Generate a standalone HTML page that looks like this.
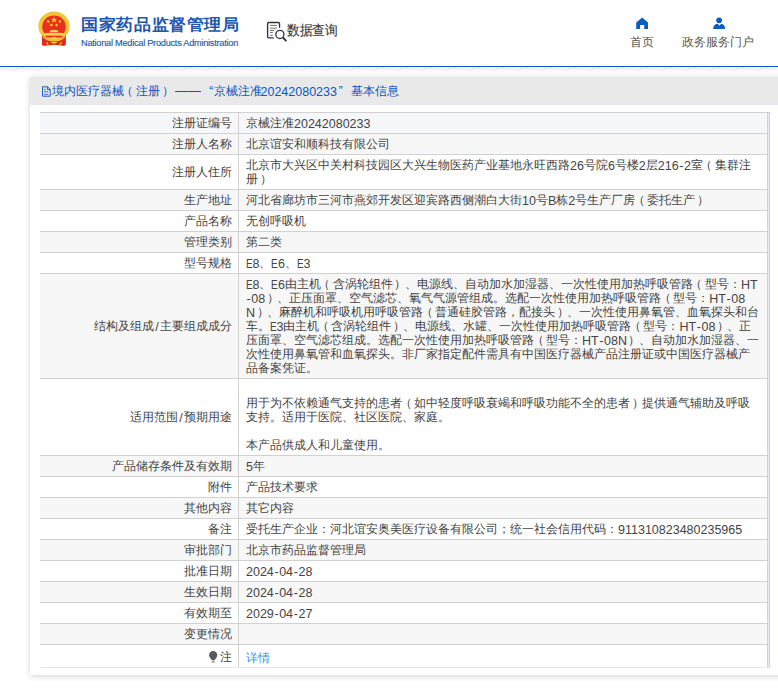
<!DOCTYPE html>
<html><head><meta charset="utf-8"><style>
*{box-sizing:border-box}
html,body{margin:0;padding:0;background:#fff;width:778px;height:688px;overflow:hidden}
body{font-family:"Liberation Sans",sans-serif;font-size:12px;color:#333;position:relative;text-spacing-trim:space-all}
.abs{position:absolute}
#cn{left:80.5px;top:13px;font-size:16px;font-weight:bold;color:#2256ae;white-space:nowrap;line-height:24px;letter-spacing:0.63px;transform:scaleX(1.06);transform-origin:0 0}
#en{left:81px;top:37px;font-size:9.2px;color:#2859b0;white-space:nowrap;line-height:12px;letter-spacing:-0.25px;-webkit-text-stroke:0.15px #2859b0}
#sqt{left:286.7px;top:20px;font-size:14.2px;letter-spacing:0px;color:#3a3a3a;line-height:20px;white-space:nowrap;transform:scaleX(0.91);transform-origin:0 0;-webkit-text-stroke:0.15px #3a3a3a}
.nav{text-align:center;font-size:12px;color:#555;line-height:16px;white-space:nowrap}
#topline{left:0;top:66px;width:778px;height:1px;background:#0b5ebf}
#hatch{left:0;top:67px;width:778px;height:3px;background:linear-gradient(135deg,transparent 35%,#e0e0e0 35%,#e0e0e0 65%,transparent 65%) 0 0/3px 3px}
#panel{left:30px;top:77px;width:760px;height:598px;background:#fff;box-shadow:0 1px 6px rgba(0,0,0,.18)}
#ph{left:0;top:0;width:100%;height:28px;background:#e9e9e9;border-bottom:1px solid #e6eaf4}
.tt{position:absolute;top:6px;font-size:12px;color:#0d55c2;line-height:16px;white-space:nowrap}
table{position:absolute;left:10px;top:35px;border-collapse:collapse;width:729.5px}
td{border-top:1px solid #d1d1d1;font-size:12px;line-height:14px;padding:3px 6px 3px 7px;color:#444;vertical-align:middle;white-space:nowrap}
td.l{width:198.5px;text-align:right;border-right:1px solid #d1d1d1;padding-right:6px}
td.e{width:2px;padding:0;border-left:1px solid #d1d1d1;border-right:1px solid #d1d1d1;background:#e8ebf3 !important;border-top:none}
tr.first td.e{border-top:1px solid #d1d1d1}
tr.last td.e{border-bottom:none}
tr:nth-child(even) td{background:#f7f7f7}
tr.first td{background:#f5f7fb}
.pl{position:relative;left:-2.5px}
.pr{position:relative;left:1.5px}
.lt{font-size:12.5px;position:relative;top:1px}
.E{display:inline-block;width:6.5px;transform:scaleX(0.8);transform-origin:0 0}
.hy{margin:0 0.6px}
.sl{margin:0 1.3px}

tr.last td{border-bottom:1px solid #e4e9f2;padding-top:5px;padding-bottom:3px}
.bulb{vertical-align:-2px;margin-right:1.7px}
.link{color:#3d8de6;font-size:12px;position:relative;top:1px;letter-spacing:0.3px}
</style></head><body>
<svg class="abs" style="left:36px;top:9px" width="36" height="40" viewBox="36 9 36 40">
 <path d="M41.8 34 L66 34 L65.8 45.2 Q63 46 60.5 45.6 L54 44.8 L47.5 45.6 Q45 46 42 45.2Z" fill="#e0281c"/>
 <ellipse cx="54" cy="26.1" rx="15.7" ry="14.5" fill="#f3c636"/>
 <ellipse cx="54" cy="26.8" rx="11.8" ry="11.3" fill="#e8301f"/>
 <polygon points="54,16.6 54.8,18.9 57.2,18.9 55.3,20.3 56,22.6 54,21.2 52,22.6 52.7,20.3 50.8,18.9 53.2,18.9" fill="#f7d43c"/>
 <circle cx="48.2" cy="21.5" r="1.2" fill="#f7d43c"/>
 <circle cx="59.9" cy="21.5" r="1.2" fill="#f7d43c"/>
 <circle cx="51.4" cy="25" r="1.2" fill="#f7d43c"/>
 <circle cx="56.5" cy="25" r="1.2" fill="#f7d43c"/>
 <path d="M49.3 32.2 L50.3 30.6 L52 30 H56 L57.7 30.6 L58.7 32.2Z" fill="#f8d75a"/>
 <rect x="44.8" y="32.9" width="18.4" height="2.9" fill="#f6d24a"/><rect x="45.5" y="35.8" width="17" height="1.6" fill="#e8301f"/>
 <path d="M42.5 35.5 Q46 40 54 40.2 Q62 40 65.5 35.5 L65 37.5 Q61 41.6 54 41.6 Q47 41.6 43 37.5Z" fill="#f3c636"/>
 <path d="M51.3 37.2 Q54 36.5 56.7 37.2 L56.4 39.8 Q54 39.3 51.6 39.8Z" fill="#f3c636"/>
 <path d="M50.5 42.6 Q54 41 57.5 42.6 Q54 44.6 50.5 42.6Z" fill="#f2ca3a"/>
 <path d="M45.8 42 L47.5 42.3 L48.8 45.5 L47.8 45.6Z" fill="#f2ca3a"/>
 <path d="M62.2 42 L60.5 42.3 L59.2 45.5 L60.2 45.6Z" fill="#f2ca3a"/>
</svg>
<div id="cn" class="abs">国家药品监督管理局</div>
<div id="en" class="abs">National Medical Products Administration</div>
<svg class="abs" style="left:260px;top:12px" width="36" height="36" viewBox="260 12 36 36">
 <path d="M273.8 37.8H268.6Q267.6 37.8 267.6 36.8V23.5Q267.6 22.5 268.6 22.5H278.5Q279.5 22.5 279.5 23.5V27.7" fill="none" stroke="#33333f" stroke-width="1.35"/>
 <path d="M270.1 25.4h6.9M270.1 28.2h6.9M270.1 30.5h4.3M270.1 32.5h2.7M270.1 35.3h2.7" stroke="#6f6f78" stroke-width="1"/>
 <circle cx="279.9" cy="34.4" r="4.05" fill="none" stroke="#33333f" stroke-width="1.35"/>
 <path d="M282.9 37.5l3.5 3.6" stroke="#33333f" stroke-width="1.8"/>
</svg>
<div id="sqt" class="abs">数据查询</div>
<svg class="abs" style="left:630px;top:14px" width="24" height="18" viewBox="630 14 24 18"><path d="M642.2 17.6L636.2 22.4V29H640.1V25H644.2V29H648V22.4Z" fill="#0a5cc5"/></svg>
<div class="abs nav" style="left:622px;width:40px;top:34px">首页</div>
<svg class="abs" style="left:708px;top:14px" width="24" height="18" viewBox="708 14 24 18"><circle cx="719.1" cy="20.3" r="2.9" fill="#0a5cc5"/><path d="M713.1 29.1Q713.3 25 716.3 23.9H718L719.5 25.8L721 23.9H722.2Q725 25 725.1 29.1Z" fill="#0a5cc5"/></svg>
<div class="abs nav" style="left:678px;width:80px;top:34px">政务服务门户</div>
<div id="topline" class="abs"></div>
<div id="hatch" class="abs"></div>
<div id="panel" class="abs">
 <div id="ph" class="abs"></div>
 <svg class="abs" style="left:10px;top:8px" width="12" height="12" viewBox="40 85 12 12">
  <path d="M42.5 86.8H47.6L50.2 89.4V96.2H42.5Z" fill="none" stroke="#1b5ccc" stroke-width="1"/>
  <path d="M47.5 86.8V89.5H50.2" fill="none" stroke="#1b5ccc" stroke-width="1"/>
  <path d="M44 89.5h1.8M44 91.7h4.3M44 94.3h4.3" stroke="#2a5fc8" stroke-width="0.9"/>
 </svg>
 <div class="tt" style="left:21.5px;">境内医疗器械</div><div class="tt" style="left:91.3px;">（</div><div class="tt" style="left:106px;">注册</div><div class="tt" style="left:131.6px;">）</div><div class="tt" style="left:145px;transform:scaleX(1.08);transform-origin:0 0;display:inline-block">——</div><div class="tt" style="left:179.3px;">“</div><div class="tt" style="left:183.5px;">京械注准</div><div class="tt" style="left:230.5px;font-size:12.5px;margin-top:1px">20242080233</div><div class="tt" style="left:308.8px;">”</div><div class="tt" style="left:320.5px;">基本信息</div>
 <table>
<tr class="first"><td class="l">注册证编号</td><td>京械注准<span class="lt">20242080233</span></td><td class="e"></td></tr>
<tr><td class="l">注册人名称</td><td>北京谊安和顺科技有限公司</td><td class="e"></td></tr>
<tr><td class="l">注册人住所</td><td>北京市大兴区中关村科技园区大兴生物医药产业基地永旺西路<span class="lt">26</span>号院<span class="lt">6</span>号楼<span class="lt">2</span>层<span class="lt">216<span class="hy">-</span>2</span>室<span class="pl">（</span>集群注<br>册<span class="pr">）</span></td><td class="e"></td></tr>
<tr><td class="l">生产地址</td><td>河北省廊坊市三河市燕郊开发区迎宾路西侧潮白大街<span class="lt">10</span>号<span class="lt">B</span>栋<span class="lt">2</span>号生产厂房<span class="pl">（</span>委托生产<span class="pr">）</span></td><td class="e"></td></tr>
<tr><td class="l">产品名称</td><td>无创呼吸机</td><td class="e"></td></tr>
<tr><td class="l">管理类别</td><td>第二类</td><td class="e"></td></tr>
<tr><td class="l">型号规格</td><td><span class="lt"><span class="E">E</span>8</span>、<span class="lt"><span class="E">E</span>6</span>、<span class="lt"><span class="E">E</span>3</span></td><td class="e"></td></tr>
<tr><td class="l">结构及组成<span class="lt sl">/</span>主要组成成分</td><td><span class="lt"><span class="E">E</span>8</span>、<span class="lt"><span class="E">E</span>6</span>由主机<span class="pl">（</span>含涡轮组件<span class="pr">）</span>、电源线、自动加水加湿器、一次性使用加热呼吸管路<span class="pl">（</span>型号：<span class="lt">HT</span><br><span class="lt"><span class="hy">-</span>08</span><span class="pr">）</span>、正压面罩、空气滤芯、氧气气源管组成。选配一次性使用加热呼吸管路<span class="pl">（</span>型号：<span class="lt">HT<span class="hy">-</span>08</span><br><span class="lt">N</span><span class="pr">）</span>、麻醉机和呼吸机用呼吸管路<span class="pl">（</span>普通硅胶管路，配接头<span class="pr">）</span>、一次性使用鼻氧管、血氧探头和台<br>车。<span class="lt"><span class="E">E</span>3</span>由主机<span class="pl">（</span>含涡轮组件<span class="pr">）</span>、电源线、水罐、一次性使用加热呼吸管路<span class="pl">（</span>型号：<span class="lt">HT<span class="hy">-</span>08</span><span class="pr">）</span>、正<br>压面罩、空气滤芯组成。选配一次性使用加热呼吸管路<span class="pl">（</span>型号：<span class="lt">HT<span class="hy">-</span>08N</span><span class="pr">）</span>、自动加水加湿器、一<br>次性使用鼻氧管和血氧探头。非厂家指定配件需具有中国医疗器械产品注册证或中国医疗器械产<br>品备案凭证。</td><td class="e"></td></tr>
<tr><td class="l">适用范围<span class="lt sl">/</span>预期用途</td><td><br>用于为不依赖通气支持的患者<span class="pl">（</span>如中轻度呼吸衰竭和呼吸功能不全的患者<span class="pr">）</span>提供通气辅助及呼吸<br>支持。适用于医院、社区医院、家庭。<br><br>本产品供成人和儿童使用。</td><td class="e"></td></tr>
<tr><td class="l">产品储存条件及有效期</td><td><span class="lt">5</span>年</td><td class="e"></td></tr>
<tr><td class="l">附件</td><td>产品技术要求</td><td class="e"></td></tr>
<tr><td class="l">其他内容</td><td>其它内容</td><td class="e"></td></tr>
<tr><td class="l">备注</td><td>受托生产企业：河北谊安奥美医疗设备有限公司；统一社会信用代码：<span class="lt">911310823480235965</span></td><td class="e"></td></tr>
<tr><td class="l">审批部门</td><td>北京市药品监督管理局</td><td class="e"></td></tr>
<tr><td class="l">批准日期</td><td><span class="lt">2024<span class="hy">-</span>04<span class="hy">-</span>28</span></td><td class="e"></td></tr>
<tr><td class="l">生效日期</td><td><span class="lt">2024<span class="hy">-</span>04<span class="hy">-</span>28</span></td><td class="e"></td></tr>
<tr><td class="l">有效期至</td><td><span class="lt">2029<span class="hy">-</span>04<span class="hy">-</span>27</span></td><td class="e"></td></tr>
<tr><td class="l">变更情况</td><td></td><td class="e"></td></tr>
<tr class="last"><td class="l"><svg class="bulb" width="9" height="12" viewBox="0 0 9 12"><path d="M4.2 0.1C1.9 0.1 0.1 1.9 0.1 4.1c0 1.5.8 2.6 1.5 3.5.5.6.8 1 .9 1.6h3.4c.1-.6.4-1 .9-1.6.7-.9 1.5-2 1.5-3.5C8.3 1.9 6.5.1 4.2.1z" fill="#5a5a5e"/><rect x="2.8" y="10.4" width="2.8" height="1.1" fill="#6a6a70"/></svg>注</td><td><span class="link">详情</span></td><td class="e"></td></tr>
 </table>
</div>
</body></html>
